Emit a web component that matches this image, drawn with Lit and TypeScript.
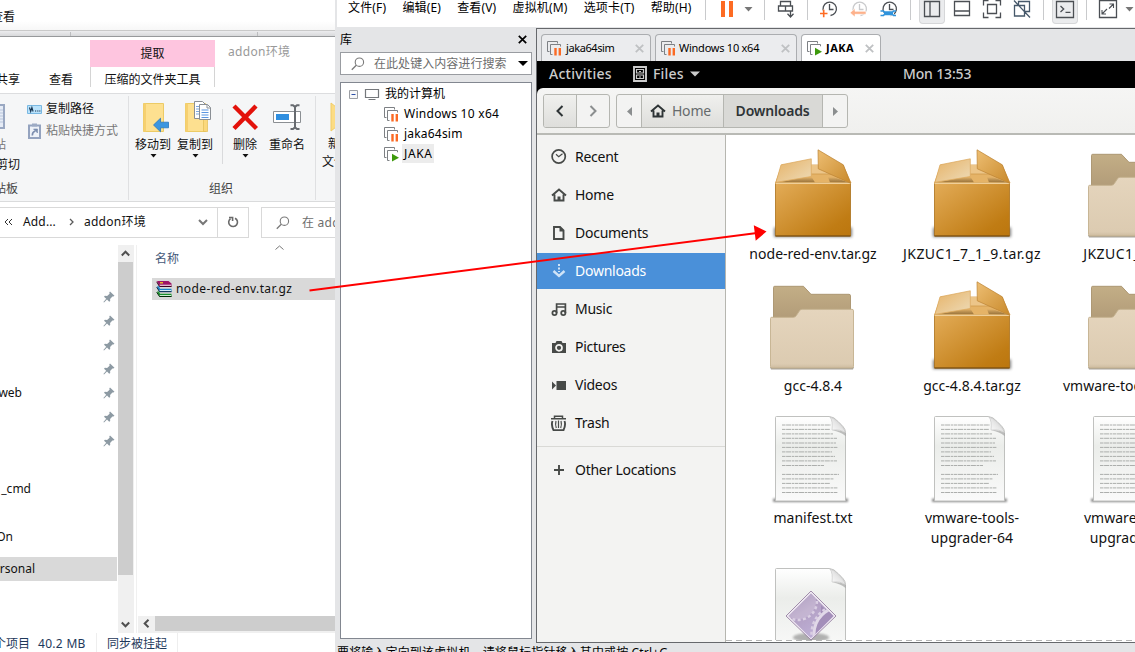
import { LitElement, html, svg, css, nothing } from "lit";
import { customElement } from "lit/decorators.js";
import { classMap } from "lit/directives/class-map.js";

const base = css`
  * { box-sizing: border-box; }
  svg { display: block; flex: none; }
  span { white-space: nowrap; flex: none; }
`;

const caret = html`<svg width="7" height="4" viewBox="0 0 7 4"><path d="M0.5 0h6l-3 3.6z" fill="#111" /></svg>`;

const pin = html`<svg width="12" height="12" viewBox="0 0 12 12">
  <path d="M7 0.5l4.5 4.3-1.2.8-.9-.2-2.3 2.5.1 2-1 .9-2.2-2.2L1 11.5l-.6-.4 2.8-3.3L1 5.7l.9-.9 2.2.2L6.6 2.7 6.3 1.4z" fill="#8d9aa3" />
</svg>`;

const magnifier = (c: string) => html`<svg width="14" height="14" viewBox="0 0 14 14" fill="none" stroke=${c}>
  <circle cx="8.4" cy="5.2" r="4.2" stroke-width="1.1" /><path d="M5.3 8.3L.8 12.8" stroke-width="1.3" />
</svg>`;

const moveIcon = html`<svg width="36" height="34" viewBox="0 0 36 34">
  <path d="M8.5 2.5h20v28h-20z" fill="#fde090" stroke="#eccb66" /><path d="M8.5 2.5h2.5v28h-2.500z" fill="#f6d070" />
  <path d="M18.500 24l7-6.800v4h8v5.600h-8v4z" fill="#3c96e0" stroke="#2876bd" stroke-width=".8" />
</svg>`;
const copyIcon = html`<svg width="36" height="34" viewBox="0 0 36 34">
  <path d="M8.5 2.5h20v28h-20z" fill="#fde090" stroke="#eccb66" /><path d="M8.5 2.5h2.5v28h-2.500z" fill="#f6d070" />
  <path d="M26.500 18v12.500h4v-12.500z" fill="#fbd87c" stroke="#e2bd55" stroke-width=".7" />
  <path d="M17.500 .5h8l3 3v14h-11z" fill="#fff" stroke="#8a8f95" /><path d="M19 5.500h7M19 8h7M19 10.500h7M19 13h7" stroke="#7ba7de" />
  <path d="M22.500 3.500h8l3 3v12h-11z" fill="#fff" stroke="#8a8f95" /><path d="M30 3.500v3.500h3.500" fill="none" stroke="#8a8f95" />
  <path d="M24.500 9h7M24.500 11.500h7M24.500 14h7M24.500 16.500h7" stroke="#5b95e0" />
</svg>`;
const deleteIcon = html`<svg width="26" height="34" viewBox="0 0 26 34"><path d="M2 5l22.500 22.500M24 5l-22 22.500" stroke="#e3120b" stroke-width="4.400" /></svg>`;
const renameIcon = html`<svg width="30" height="34" viewBox="0 0 30 34" fill="none">
  <path d="M1.500 10.500h27v11h-27z" fill="#fff" stroke="#8b8f93" /><path d="M4 13h13v6h-13z" fill="#2f8fe0" />
  <path d="M18.500 4.300h2.500l2 1.600 2-1.600h2.500M18.500 28h2.500l2-1.600 2 1.600h2.500M23 5.500v21.500" stroke="#676b70" stroke-width="2" />
</svg>`;
const pathIcon = html`<svg width="15" height="9" viewBox="0 0 15 9">
  <path d="M.5.5h14v8h-14z" fill="#b9e2fb" stroke="#79b8e2" /><path d="M2.500 2.500l1.200 4 1.200-4 1.200 4M8 6h1.200M10.200 6h1.200M12.200 6h1.200" fill="none" stroke="#173450" stroke-width="1.100" />
</svg>`;
const shortcutIcon = html`<svg width="13" height="16" viewBox="0 0 13 16">
  <path d="M1 2.500h11v12.500h-11z" fill="#eef2f8" stroke="#94a3bf" stroke-width="2" /><path d="M4 .5h5v3h-5z" fill="#9dabc4" />
  <path d="M4.300 12.500c0-3 1-4 3-4.500" fill="none" stroke="#7b8dae" stroke-width="1.600" /><path d="M5.500 6h4v4z" fill="#7b8dae" stroke="#7b8dae" stroke-width=".6" />
</svg>`;
const rarIcon = html`<svg width="16" height="16" viewBox="0 0 16 16">
  <path d="M1 0h11.500l3 2.500v3h-12z" fill="#9c1466" /><path d="M3.500 3.700h11.500v1.200h-11.500z" fill="#e9c9db" /><path d="M.7.8l2.800 4.700h12" fill="none" stroke="#3a0020" />
  <path d="M1 5.200h2l1 2.500h11.500v3h-12z" fill="#1a86cc" /><path d="M3.500 9h11.500v1.100h-11.500z" fill="#d3ebf8" /><path d="M.7 6l2.800 4.700h12" fill="none" stroke="#012040" />
  <path d="M1 10.500h2l1 2.300h11.500v3h-12z" fill="#18902c" /><path d="M3.500 14h11.500v1h-11.500z" fill="#cdeed2" /><path d="M.7 11.200l2.800 4.300h12" fill="none" stroke="#022a08" />
  <path d="M4 1h3v1.500h-3z" fill="#e5b82b" />
</svg>`;

const navRows: { text?: string; cls?: string; pinned?: boolean }[] = [
  { pinned: true }, { pinned: true }, { pinned: true }, { pinned: true },
  { pinned: true, text: "web", cls: "e22" }, { pinned: true }, { pinned: true },
  {}, { text: "_cmd", cls: "e31" }, {}, { text: "AddOn", cls: "e13" },
];

@customElement("explorer-window")
class ExplorerWindow extends LitElement {
  static styles = [base, css`
    :host { display: flex; flex-direction: column; width: 335px; height: 652px; background: #fff; overflow: hidden; font: 12px/20px "Noto Sans", "Noto Sans CJK SC", sans-serif; color: #111; }
    .behind { height: 30px; padding-top: 7px; background: linear-gradient(#fff 70%, #f7f7f7); flex: none; }
    .clip { display: flex; justify-content: flex-end; overflow: hidden; flex: none; }
    .e6 { width: 6px; } .e13 { width: 13px; } .e15 { width: 15px; } .e18 { width: 18px; } .e20 { width: 20px; }
    .e22 { width: 22px; } .e29 { width: 30px; } .e31 { width: 31px; } .e35 { width: 35px; }
    .band { display: flex; height: 7px; flex: none; border-top: 1px solid #c9c9c9; border-bottom: 1px solid #97999b; background: linear-gradient(#ececee, #d8d9db); }
    .band i { border-right: 1px solid #bcbdbf; height: 4px; margin-top: 1px; width: 71px; }
    .band i + i { width: 187px; }
    .tabs { height: 57px; flex: none; display: flex; border-bottom: 1px solid #dcdddf; }
    .tabs .clip, .view { padding-top: 33px; }
    .view { width: 70px; padding-left: 29px; }
    .tool { width: 125px; padding-top: 3px; text-align: center; }
    .pink { background: #fec5df; height: 27px; line-height: 28px; }
    .toolname { height: 20px; line-height: 26px; border: solid #d4d4d4; border-width: 0 1px; }
    .title { color: #999; padding: 5px 0 0 13px; letter-spacing: .3px; }
    .ribbon { display: flex; height: 108px; flex: none; background: #f5f6f7; border-bottom: 1px solid #dadbdc; padding-top: 2px; }
    .group { display: flex; flex-direction: column; height: 104px; border-right: 1px solid #dfe0e2; flex: none; }
    .body { display: flex; height: 84px; }
    .foot { line-height: 22px; color: #444; text-align: center; }
    .g1 { width: 129px; } .g2 { width: 187px; } .g3 { width: 19px; border: 0; overflow: hidden; }
    .g2 .foot { padding-right: 2px; }
    .paste { width: 27px; padding-top: 8px; }
    .paste svg { margin-bottom: 5px; }
    .grey { color: #777; }
    .small { display: flex; align-items: center; height: 22px; gap: 4px; }
    .small.grey { padding-left: 1px; gap: 5px; }
    .smalls { padding-top: 2px; }
    .big { display: flex; flex-direction: column; align-items: center; width: 36px; padding-top: 5px; }
    .big + .big { margin-left: 6px; }
    .big svg + span { margin-bottom: -1px; }
    .g2 .body { padding-left: 6px; }
    .vsep { width: 1px; height: 55px; margin: 13px 4px 0 9px; background: #d9dadc; }
    .g3 svg { margin: 6px 0 0 14px; }
    .g3 span { line-height: 18px; }
    .g3 .n { padding: 3px 0 0 12px; } .g3 .w { padding-left: 6px; }
    .address { display: flex; height: 43px; padding-top: 5px; flex: none; }
    .box { display: flex; align-items: center; width: 249px; height: 31px; border: 1px solid #d9d9d9; border-left: 0; }
    .box .a { letter-spacing: .15px; margin: 0 13px 2px 10px; } .box .b { letter-spacing: .25px; margin: 0 49px 2px 10px; width: 64px; }
    .box .chev { width: 12px; } .box svg { margin-bottom: 1px; }
    .box .q { margin-left: 4px; }
    .refresh { display: flex; justify-content: center; align-items: center; height: 29px; width: 31px; margin-left: auto; border-left: 1px solid #d9d9d9; }
    .find { display: flex; align-items: center; gap: 12px; width: 74px; height: 31px; margin-left: 12px; padding-left: 14px; border: 1px solid #d9d9d9; border-right: 0; color: #6d6d6d; overflow: hidden; letter-spacing: .25px; }
    .panes { display: flex; height: 388px; flex: none; }
    .nav { width: 118px; padding-top: 40px; flex: none; }
    .navrow { display: flex; align-items: center; justify-content: space-between; height: 24px; width: 117px; padding-right: 2px; }
    .navrow svg { margin-left: auto; }
    .sel { background: #d9d9d9; margin-top: 8px; }
    .scroll { width: 16px; display: flex; flex-direction: column; flex: none; background: #f0f0f0; }
    .cap { height: 17px; width: 15px; display: flex; align-items: center; justify-content: center; }
    .thumb { height: 313px; width: 15px; background: #cdcdcd; }
    .push { margin-top: auto; }
    .main { display: flex; flex-direction: column; width: 199px; margin-left: 2px; border-left: 1px solid #f0f0f0; flex: none; }
    .sort { margin-left: 138px; height: 6px; }
    .head { color: #45597a; padding-left: 18px; margin-top: -2px; height: 29px; }
    .file { display: flex; align-items: center; gap: 4px; height: 22px; margin-left: 15px; padding-left: 4px; background: #d9d9d9; letter-spacing: .4px; }
    .hbar { display: flex; margin-top: auto; height: 17px; margin-left: 1px; background: #f0f0f0; }
    .hbar .cap { width: 17px; height: 15px; } .hbar .ht { flex: 1; background: #cdcdcd; height: 15px; }
    .status { display: flex; color: #1e395b; height: 19px; line-height: 22px; }
    .status .size { padding: 0 10px 0 8px; width: 67px; letter-spacing: .3px; border-right: 1px solid #eee; }
    .status .sync { padding: 0 10px; border-right: 1px solid #eee; }
  `];

  render() {
    const g = "#5a5a5a";
    return html`
      <div class="behind"><div class="clip e15"><span>查看</span></div></div>
      <div class="band"><i></i><i></i></div>
      <div class="tabs">
        <div class="clip e20"><span>共享</span></div>
        <div class="view"><span>查看</span></div>
        <div class="tool"><div class="pink">提取</div><div class="toolname">压缩的文件夹工具</div></div>
        <div class="title"><span>addon环境</span></div>
      </div>
      <div class="ribbon">
        <div class="group g1">
          <div class="body">
            <div class="paste">
              <svg width="6" height="26" viewBox="0 0 6 26"><path d="M-6 1h10v23h-10z" fill="#e6ecf6" stroke="#9aa8c2" stroke-width="2" /><path d="M0 6h3M0 9h3M0 12h3M0 15h3M0 18h3" stroke="#b9c6dc" /></svg>
              <div class="clip e6 grey"><span>粘贴</span></div>
              <div class="clip e20"><span>剪切</span></div>
            </div>
            <div class="smalls">
              <div class="small">${pathIcon}<span>复制路径</span></div>
              <div class="small grey">${shortcutIcon}<span>粘贴快捷方式</span></div>
            </div>
          </div>
          <div class="foot clip e18"><span>剪贴板</span></div>
        </div>
        <div class="group g2">
          <div class="body">
            <div class="big">${moveIcon}<span>移动到</span>${caret}</div>
            <div class="big">${copyIcon}<span>复制到</span>${caret}</div>
            <div class="vsep"></div>
            <div class="big">${deleteIcon}<span>删除</span>${caret}</div>
            <div class="big">${renameIcon}<span>重命名</span></div>
          </div>
          <div class="foot">组织</div>
        </div>
        <div class="group g3">
          <svg width="6" height="30" viewBox="0 0 6 30"><path d="M1 1l5 4v20l-5 4z" fill="#fcdc84" stroke="#f0cc66" /></svg>
          <span class="n">新建</span><span class="w">文件夹</span>
        </div>
      </div>
      <div class="address">
        <div class="box">
          <svg class="q" width="9" height="8" viewBox="0 0 9 8" fill="none" stroke="#333"><path d="M4 1L1 4l3 3M8 1L5 4l3 3" /></svg>
          <span class="a">Add...</span>
          <svg width="5" height="8" viewBox="0 0 5 8" fill="none" stroke=${g} stroke-width="1.300"><path d="M1 1l3 3-3 3" /></svg>
          <span class="b">addon环境</span>
          <svg class="chev" width="10" height="7" viewBox="0 0 10 7" fill="none" stroke="#777" stroke-width="2"><path d="M1 1l4 4 4-4" /></svg>
          <div class="refresh"><svg width="12" height="12" viewBox="0 0 12 12" fill="none" stroke="#6a6a6a" stroke-width="1.600"><path d="M8 2.200a4.400 4.400 0 1 1 -4.500 .4M2 1.500h3.600v3.600" /></svg></div>
        </div>
        <div class="find">${magnifier("#7a7a7a")}<span>在 addon环境 中搜索</span></div>
      </div>
      <div class="panes">
        <div class="nav">
          ${navRows.map((r) => html`<div class="navrow">
            ${r.text ? html`<div class="clip ${r.cls}"><span>${r.text}</span></div>` : nothing}${r.pinned ? pin : nothing}
          </div>`)}
          <div class="navrow sel"><div class="clip e35"><span>Personal</span></div></div>
        </div>
        <div class="scroll">
          <div class="cap"><svg width="9" height="7" viewBox="0 0 9 7" fill="none" stroke="#505050" stroke-width="2"><path d="M.8 5.500l3.700-3.800 3.700 3.800" /></svg></div>
          <div class="thumb"></div>
          <div class="cap push"><svg width="9" height="7" viewBox="0 0 9 7" fill="none" stroke="#505050" stroke-width="2"><path d="M.8 1.500l3.700 3.800 3.700-3.800" /></svg></div>
        </div>
        <div class="main">
          <div class="sort"><svg width="9" height="6" viewBox="0 0 9 6" fill="none" stroke="#777"><path d="M.5 4.500l4-3.500 4 3.500" /></svg></div>
          <div class="head">名称</div>
          <div class="file">${rarIcon}<span>node-red-env.tar.gz</span></div>
          <div class="hbar"><div class="cap"><svg width="7" height="9" viewBox="0 0 7 9" fill="none" stroke="#505050" stroke-width="2"><path d="M5.500.8L1.700 4.500l3.800 3.700" /></svg></div><div class="ht"></div></div>
        </div>
      </div>
      <div class="status"><div class="clip e29"><span>1 个项目</span></div><span class="size">40.2 MB</span><span class="sync">同步被挂起</span></div>
    `;
  }
}

const vmIcon = (running: boolean) => html`<svg width="15" height="15" viewBox="0 0 15 15" fill="none">
  <path d="M2.500 10.500h-2v-10h10v2M5.500 13.500h-2v-10h10v2" stroke="#7d8084" />
  ${running
    ? svg`<path d="M7 5.500h8v9h-8z" fill="#fff" opacity=".9" /><path d="M8 6.800l7 3.900-7 3.900z" fill="#3d9a0c" />`
    : svg`<path d="M8.500 7v7.500M12.800 7v7.500" stroke="#fb6a24" stroke-width="2.400" />`}
</svg>`;

const cross = (c: string, w: number) => html`<svg width="9" height="9" viewBox="0 0 9 9"><path d="M.8.8l7.400 7.400M8.200.8L.8 8.200" stroke=${c} stroke-width=${w} /></svg>`;

const tb = (inner: unknown, on = false) => html`<div class=${classMap({ tool: true, on })}><svg width="24" height="22" viewBox="0 0 24 22" fill="none" stroke="#4b4f54" stroke-width="1.300">${inner}</svg></div>`;
const clock = (c: string) => svg`<path d="M7 12.300a6.700 6.700 0 1 1 6.500 3.200M12.500 4v5.500h4" stroke=${c} />`;
const drop = html`<svg class="drop" width="9" height="5" viewBox="0 0 9 5"><path d="M.5 0h8l-4 4.500z" fill="#777" /></svg>`;
const bar = html`<i class="bar"></i>`;

@customElement("vm-window")
class VmWindow extends LitElement {
  static styles = [base, css`
    :host { display: flex; flex-direction: column; width: 800px; height: 652px; background: #e4e5e7; overflow: hidden; font: 12px/20px "Noto Sans", "Noto Sans CJK SC", sans-serif; color: #000; }
    .menu { display: flex; height: 27px; flex: none; margin-left: 2px; background: #fff; }
    .menus { display: flex; gap: 16.200px; letter-spacing: .15px; width: 368px; padding-left: 11px; line-height: 16px; flex: none; }
    .bar { width: 1px; height: 20px; margin-right: 9px; background: #c9cacc; flex: none; }
    .tool { width: 24px; height: 24px; margin-right: 6px; flex: none; }
    .tool:has(+ .bar) { margin-right: 9px; }
    .on { background: #ebecee; box-shadow: 0 0 0 1px #d6d7d9; border-radius: 0 0 3px 3px; height: 23px; }
    .drop { margin: 7px 11px 0 -1px; }
    .work { display: flex; height: 616px; flex: none; }
    .lib { display: flex; flex-direction: column; width: 192px; margin: 0 4px 0 5px; flex: none; }
    .libhead { display: flex; align-items: center; justify-content: space-between; height: 25px; padding-right: 5px; }
    .search { display: flex; align-items: center; height: 23px; padding: 0 3px 0 10px; background: #fff; border: 1px solid #999ca1; color: #6d6d6d; }
    .search span { margin-left: 9px; flex: 1; letter-spacing: .05px; }
    .tree { height: 557px; margin-top: 7px; padding: 1px 0 0 8px; background: #fff; border: 1px solid #828790; }
    .row { display: flex; align-items: center; height: 20px; gap: 5px; }
    .row svg + svg { margin-left: -1px; margin-right: -2px; }
    .child { padding-left: 35px; gap: 5px; letter-spacing: .28px; }
    .child.j { letter-spacing: .2px; }
    .cur { background: #ececec; padding: 0 2px; margin: -1px 0 0 -2px; line-height: 19px; letter-spacing: .6px; }
    .pane { display: flex; flex-direction: column; width: 599px; margin-top: 1px; border: solid #66686c; border-width: 1px 0 1px 1px; flex: none; }
    .tabs { display: flex; gap: 4px; height: 32px; padding: 5px 0 0 4px; flex: none; font-size: 11px; }
    .tab { display: flex; align-items: center; height: 27px; padding: 0 6px; border: 1px solid #abadb0; border-bottom: 0; border-radius: 4px 4px 0 0; background: #ebecee; }
    .tab svg:first-child { margin-left: -1px; }
    .tab span { margin-left: 3px; flex: 1; letter-spacing: -.25px; }
    .tab.t1 span { margin-left: 4px; letter-spacing: -.4px; }
    .tab.t3 span { letter-spacing: .5px; margin-left: 4px; }
    .t1 { width: 110px; } .t2 { width: 142px; } .t3 { width: 80px; background: #fff; font-weight: 700; }
    .hint { padding-left: 2px; line-height: 20px; letter-spacing: .14px; }
  `];

  render() {
    return html`
      <div class="menu">
        <div class="menus">${["文件(F)", "编辑(E)", "查看(V)", "虚拟机(M)", "选项卡(T)", "帮助(H)"].map((m) => html`<span>${m}</span>`)}</div>
        ${bar}
        ${tb(svg`<path d="M6 1h4v16h-4zM14 1h4v16h-4z" fill="#fd6b23" stroke="none" />`)}${drop}${bar}
        ${tb(svg`<path d="M6.500 6v-4.500h10v4.500M4.500 6h7v5h-7zM11.500 6h7v5h-7zM16.500 11v6M13.500 13.800l3 3.200 3-3.200" />`)}${bar}
        ${tb(svg`${clock("#4b4f54")}<path d="M3 13.500h8M7 9.700v8" stroke="#fff" stroke-width="3" /><path d="M3 13.500h7.500M6.700 9.700v7.500" stroke="#fd6b23" stroke-width="1.600" />`)}
        ${tb(svg`${clock("#c9cacc")}<path d="M3 12.800l5-4.300v2.800h11v3h-11v2.800z" fill="#fdb18b" stroke="#fff" stroke-width=".6" />`)}
        ${tb(svg`${clock("#4b4f54")}<path d="M7 13.200h10" stroke="#fff" stroke-width="5" /><path d="M3.500 11h3l1 1.200h8l1-1.200h2.500M3.500 15.500h3l1-1.200h8l1 1.200h2.500M7 13.300h9" stroke="#2f93dc" stroke-width="1.700" />`)}
        ${bar}
        ${tb(svg`<path d="M4.500 1.500h15v15h-15zM10 1.500v15" />`, true)}
        ${tb(svg`<path d="M4.500 1.500h15v14h-15zM4.500 11h15" />`)}
        ${tb(svg`<path d="M3.500 5.500v-5h5M15.500.5h5v5M20.500 12.500v5h-5M8.500 17.500h-5v-5M7.500 4.500h9v9h-9z" />`)}
        ${tb(svg`<path d="M8.500 6v-4.500h11v10h-5M4.500 5.500h10v10.500h-10zM4 .5l16 17" stroke="#46586a" />`)}
        ${bar}
        ${tb(svg`<path d="M3.500 1.500h17v16h-17zM7.500 6l3.200 3-3.200 3M12.500 12.300h5" />`, true)}
        ${bar}
        ${tb(svg`<path d="M3.500.5h17v17h-17z" /><path d="M13.500 4h4v4M17.500 4l-4.500 4.500M10 14h-4v-4M6 14l5-5" stroke-width="1.100" />`)}${drop}
      </div>
      <div class="work">
        <div class="lib">
          <div class="libhead"><span>库</span>${cross("#000", 1.7)}</div>
          <div class="search">${magnifier("#7a7a7a")}<span>在此处键入内容进行搜索</span><svg width="10" height="5" viewBox="0 0 10 5"><path d="M0 0h10l-5 5z" /></svg></div>
          <div class="tree">
            <div class="row">
              <svg width="9" height="9" viewBox="0 0 9 9"><path d="M.5.5h8v8h-8z" fill="#f6f7f8" stroke="#9b9ea3" /><path d="M2.500 4.500h4" stroke="#2c4fa8" /></svg>
              <svg width="20" height="13" viewBox="0 0 20 13" fill="none" stroke="#75787c"><path d="M3.500 1.500h13v8h-13zM6.500 11.500h7" stroke-width="1.200" /></svg>
              <span>我的计算机</span>
            </div>
            <div class="row child">${vmIcon(false)}<span>Windows 10 x64</span></div>
            <div class="row child j">${vmIcon(false)}<span>jaka64sim</span></div>
            <div class="row child">${vmIcon(true)}<span class="cur">JAKA</span></div>
          </div>
        </div>
        <div class="pane">
          <div class="tabs">
            <div class="tab t1">${vmIcon(false)}<span>jaka64sim</span>${cross("#bfc1c3", 1.8)}</div>
            <div class="tab t2">${vmIcon(false)}<span>Windows 10 x64</span>${cross("#bfc1c3", 1.8)}</div>
            <div class="tab t3">${vmIcon(true)}<span>JAKA</span>${cross("#bfc1c3", 1.8)}</div>
          </div>
          <guest-desktop></guest-desktop>
        </div>
      </div>
      <div class="hint"><span>要将输入定向到该虚拟机，请将鼠标指针移入其中或按 Ctrl+G。</span></div>
    `;
  }
}

const house = svg`<path d="M1 8.500L8 2.500l7 6M3.500 7.500v6h9v-6" stroke-width="1.900" /><path d="M6.500 14v-4.500h3v4.500z" fill="currentColor" stroke="none" />`;
const placeIcons: Record<string, unknown> = {
  Recent: svg`<circle cx="7.700" cy="7.500" r="6.600" stroke-width="1.700" /><path d="M5 5.300l2.700 2.400 3.800-3" stroke-width="1.200" />`,
  Home: house,
  Documents: svg`<path d="M3 2h6l3.500 3.500v8.500h-9.500z" stroke-width="1.900" /><path d="M8.500 2v4.500h4.500z" fill="currentColor" stroke="none" />`,
  Downloads: svg`<path d="M8 1v8" stroke-dasharray="2 1.500" stroke-width="2" /><path d="M2.500 8l5.500 5 5.500-5" stroke-width="2.400" />`,
  Music: svg`<circle cx="3.500" cy="12" r="2.100" stroke-width="1.800" /><circle cx="12.300" cy="12" r="2.100" stroke-width="1.800" /><path d="M5.600 12V3h8.800v9M5.600 6h8.800" stroke-width="1.700" />`,
  Pictures: svg`<path d="M1 4h3.500l1-2h5l1 2H15v10H1z" fill="currentColor" stroke="none" /><circle cx="8" cy="8.800" r="3" stroke="#f4f4f2" stroke-width="1.700" />`,
  Videos: svg`<path d="M5.500 4h9.500v9H5.500zM1 4.500l4 4-4 4z" fill="currentColor" stroke="none" />`,
  Trash: svg`<path d="M3.500 3v-1.700h8v1.700M0 3.700h15" stroke-width="1.500" /><path d="M1.500 6c-1 2.500-.5 6 1 9.200h10c1.500-3.200 2-6.700 1-9.200" stroke-width="1.900" /><path d="M5 6q-1 3.500.3 7M10 6q1 3.500-.3 7M7.500 5.500v7.500" stroke-width="1.200" />`,
  "Other Locations": svg`<path d="M8 3v10M3 8h10" stroke-width="1.900" />`,
};
const sym = (g: unknown) => html`<svg width="16" height="16" viewBox="0 0 16 16" fill="none" stroke="currentColor">${g}</svg>`;

const boxIcon = html`<svg width="96" height="96" viewBox="0 -0.500 96 96">
  <defs>
    <linearGradient id="f" x1="0" y1="0" x2="1" y2="1"><stop offset="0" stop-color="#e3ac58" /><stop offset=".8" stop-color="#c07c14" /><stop offset="1" stop-color="#bb760e" /></linearGradient>
    <linearGradient id="l" x1="0" y1="0" x2="1" y2="1"><stop offset="0" stop-color="#e6b266" /><stop offset=".8" stop-color="#ecd3a8" /></linearGradient>
    <linearGradient id="r" x1="0" y1="0" x2="1" y2="1"><stop offset="0" stop-color="#edbe73" /><stop offset="1" stop-color="#c98a2c" /></linearGradient>
    <linearGradient id="d" x1="0" y1="0" x2="0" y2="1"><stop offset=".3" stop-color="#000" stop-opacity="0" /><stop offset="1" stop-color="#4a2a00" stop-opacity=".5" /></linearGradient>
    <filter id="s" x="-10%" width="120%" y="-100%" height="300%"><feGaussianBlur stdDeviation="1.600" /></filter>
  </defs>
  <path d="M9 83h78v9.500H9z" fill="#000" opacity=".5" filter="url(#s)" />
  <path d="M17 20.500h61l8 18H10.500z" fill="#e5b367" stroke="#d79b45" stroke-width=".8" />
  <path d="M46 20.500h32v9H46z" fill="#ecc589" /><path d="M46 29.500h24" stroke="#cf9a4d" stroke-width=".8" />
  <path d="M13 38L46 31.500l4 6.500zM85.500 38.700L62 30l3 8z" fill="url(#d)" />
  <path d="M10.500 38.500h75v53h-75z" fill="url(#f)" stroke="#a9701a" stroke-width=".8" />
  <path d="M10.500 38.800h75" stroke="#f0cf98" stroke-width="1.500" /><path d="M10.500 91.500h75" stroke="#6e470c" />
  <path d="M16 20.300L46.300 14.300V32L11 37.800z" fill="url(#l)" stroke="#dba85c" stroke-width=".7" />
  <path d="M53 5.300L78.300 20.300 85.500 38.700 53.300 24.300z" fill="url(#r)" stroke="#bb8332" stroke-width=".7" />
</svg>`;

const folderIcon = html`<svg width="96" height="96" viewBox="0 0 96 96">
  <defs>
    <linearGradient id="b" x1="0" y1="0" x2="0" y2="1"><stop offset="0" stop-color="#c3ae86" /><stop offset=".8" stop-color="#b29c79" /></linearGradient>
    <linearGradient id="t" x1="0" y1="0" x2="0" y2="1"><stop offset="0" stop-color="#e5d5bd" /><stop offset=".93" stop-color="#dccbb1" /><stop offset="1" stop-color="#cdbb9f" /></linearGradient>
  </defs>
  <path d="M5 91h84l-1 2.500H6z" fill="#a6a29b" />
  <path d="M8.500 50V11.500q0-1.200 1.200-1.200H38.500l7.500 8h38q1.500 0 1.500 1.500V50z" fill="url(#b)" stroke="#a8926c" stroke-width=".9" />
  <path d="M5.500 42.500q0-1.200 1.200-1.200H28.500q2 0 3-2l3-4.500q1-1.500 2.500-1.500H87q1.500 0 1.500 1.500V90.500q0 1.500-1.500 1.500H7q-1.500 0-1.500-1.500z" fill="url(#t)" stroke="#c3b08d" stroke-width=".9" />
</svg>`;

const sheet = svg`
  <defs>
    <linearGradient id="p" x1="0" y1="0" x2="0" y2="1"><stop offset="0" stop-color="#fff" /><stop offset=".35" stop-color="#ebedea" /><stop offset="1" stop-color="#fafafa" /></linearGradient>
    <linearGradient id="c" x1="0" y1="1" x2="1" y2="0"><stop offset="0" stop-color="#fff" /><stop offset=".5" stop-color="#e6e6e6" /><stop offset="1" stop-color="#aaa" /></linearGradient>
    <filter id="h" x="-10%" width="120%" y="-100%" height="300%"><feGaussianBlur stdDeviation="1.200" /></filter>
  </defs>
  <path d="M8 90.500h75v3.500H8z" fill="#000" opacity=".45" filter="url(#h)" />
  <path d="M10.500 9.500q0-1 1-1H64q5 0 9 5l5 5q2.500 3 2.500 6V92.500q0 .5-.5.500H11q-.5 0-.5-.5z" fill="url(#p)" stroke="#b9bab8" stroke-width=".9" />
  <path d="M65 9q3 4 2 13 9-1 13.500 3-1-5-6-10T65 9z" fill="url(#c)" stroke="#bbb" stroke-width=".5" />
  <path d="M67.500 22.500q8-1 13 2.500v3q-5-4.500-13-5.500z" fill="#777" opacity=".45" />`;
const lines: [number, number][] = [[17, 49], [21.4, 48], [25.9, 51], [30.3, 55], [35, 54], [39.4, 56], [43.9, 50], [48.4, 53], [52.9, 55], [57.5, 42], [66.4, 57], [70.9, 52], [75.4, 48], [79.9, 56], [84.5, 56]];
const textIcon = html`<svg width="96" height="96" viewBox="0 0 96 96">${sheet}
  ${lines.map(([y, w]) => svg`<path d=${`M17 ${y}h${w}`} stroke="#acaeac" stroke-width="1" stroke-dasharray="3.500 .6 5 .7 2.500 .6" />`)}
</svg>`;
const scriptIcon = html`<svg width="96" height="96" viewBox="0 0 96 96">${sheet}
  <defs>
    <linearGradient id="m" x1="0" y1="0" x2=".6" y2="1"><stop offset="0" stop-color="#8b76a4" /><stop offset=".45" stop-color="#b3a0c4" /><stop offset="1" stop-color="#bfb1d8" /></linearGradient>
    <clipPath id="k"><path d="M46 33.500L68.500 56 46 78.500 23.500 56z" /></clipPath>
  </defs>
  <ellipse cx="46" cy="77.500" rx="18" ry="4.500" fill="#000" opacity=".28" filter="url(#h)" />
  <path d="M46 31L71 56 46 80 21 56z" fill="#f0eaf3" stroke="#8b7498" stroke-width=".8" />
  <path d="M46 33.500L68.500 56 46 78.500 23.500 56z" fill="url(#m)" />
  <g clip-path="url(#k)" fill="none">
    <circle cx="33" cy="41" r="18" fill="#d8cce1" opacity=".45" /><circle cx="33" cy="41" r="19" stroke="#dacfe3" stroke-width="2.500" stroke-dasharray="3 2.400" />
    <path d="M56 45q4 5 17 10l-12 25h-12q-1-20 7-27z" fill="#9c86b1" opacity=".75" />
    <circle cx="76" cy="74" r="27" stroke="#e1d8e8" stroke-width="3" /><circle cx="76" cy="74" r="29.500" stroke="#dacfe3" stroke-width="2.500" stroke-dasharray="3 2.400" />
  </g>
</svg>`;

const art: Record<string, unknown> = { box: boxIcon, folder: folderIcon, text: textIcon, script: scriptIcon };
const files: [string, string[]][] = [
  ["box", ["node-red-env.tar.gz"]], ["box", ["JKZUC1_7_1_9.tar.gz"]], ["folder", ["JKZUC1_7_1_9"]],
  ["folder", ["gcc-4.8.4"]], ["box", ["gcc-4.8.4.tar.gz"]], ["folder", ["vmware-tools-distrib"]],
  ["text", ["manifest.txt"]], ["text", ["vmware-tools-", "upgrader-64"]], ["text", ["vmware-tools-", "upgrader-32"]],
  ["script", []],
];

@customElement("guest-desktop")
class GuestDesktop extends LitElement {
  static styles = [base, css`
    :host { display: flex; flex-direction: column; width: 598px; height: 581px; background: #000; overflow: hidden; font: 14px/20px "Noto Sans", sans-serif; letter-spacing: -.15px; color: #111; }
    .top { display: flex; align-items: center; height: 27px; padding: 0 0 2px 12px; color: #ccc; font-weight: 500; letter-spacing: 0; flex: none; }
    .act { width: 84px; letter-spacing: .25px; }
    .files { width: 33px; margin: 0 4px 0 6px; letter-spacing: .2px; }
    .time { margin-left: 203px; letter-spacing: -.15px; }
    .head { display: flex; align-items: center; height: 47px; padding: 1px 0 0 6px; background: linear-gradient(#f5f5f4, #f0f0ee); border-bottom: 2px solid #b9bab5; border-radius: 6px 0 0 0; flex: none; }
    .btns { display: flex; height: 34px; border: 1px solid #b5b6b1; border-radius: 3px; background: #f3f3f2; overflow: hidden; margin-right: 6px; }
    .b { display: flex; align-items: center; justify-content: center; border-right: 1px solid #b5b6b1; color: #8b8e8f; gap: 6px; }
    .b:last-child { border: 0; }
    .raised { background: linear-gradient(#f0f0ee, #dededb); }
    .w33 { width: 33px; } .w32 { width: 32px; } .w25 { width: 25px; } .w82 { width: 82px; padding-right: 4px; } .w99 { width: 99px; } .w24 { width: 24px; }
    .dark { color: #2e3436; }
    .down { background: #d9d9d6; color: #2e3436; font-weight: 600; letter-spacing: -.2px; padding-right: 1px; }
    .home span { color: #666b6d; } .home svg { color: #2e3436; }
    .body { display: flex; height: 507px; }
    .side { width: 189px; padding-top: 4px; background: #f3f3f2; border-right: 1px solid #b6b6b0; flex: none; letter-spacing: -.26px; }
    .place { display: flex; align-items: center; gap: 8px; height: 36px; margin-bottom: 2px; padding-left: 14px; }
    .place svg { color: #474a48; }
    .place.sel { background: #4a90d9; color: #fff; } .place.sel svg { color: #cfe3f7; }
    .line { height: 1px; background: #d9d9d6; margin: 5px 0; }
    .view { display: flex; flex-direction: column; width: 409px; height: 507px; background: #fff; overflow: hidden; }
    .grid { display: grid; grid-template-columns: repeat(3, 159px); row-gap: 12px; width: 477px; height: 505px; padding-top: 9px; margin-left: 8px; align-content: start; overflow: hidden; flex: none; }
    .cell { display: flex; flex-direction: column; align-items: center; letter-spacing: .02px; }
    .wide { letter-spacing: .45px; }
    .pic { width: 97px; height: 100px; }
    .cell span { margin-left: -1px; }
    .dash { height: 1px; background: repeating-linear-gradient(90deg, #b4b4b4 0 6px, #fff 6px 10px); flex: none; }
  `];

  render() {
    return html`
      <div class="top">
        <span class="act">Activities</span>
        <svg width="14" height="16" viewBox="0 0 14 16" fill="none" stroke="#ccc"><path d="M1 1h12v14h-12z" stroke-width="1.900" /><path d="M3.500 3.500h7v3.500h-7zM3.500 9h7v3.500h-7z" stroke-width="1.200" /><path d="M6 5.500h2M6 11h2" /></svg>
        <span class="files">Files</span>
        <svg width="10" height="6" viewBox="0 0 10 6"><path d="M0 .5h10l-5 5z" fill="#ccc" /></svg>
        <span class="time">Mon 13:53</span>
      </div>
      <div class="head">
        <div class="btns">
          <div class="b raised dark w33"><svg width="8" height="12" viewBox="0 0 8 12" fill="none" stroke="currentColor" stroke-width="2"><path d="M6.500 1l-5 5 5 5" /></svg></div>
          <div class="b w32"><svg width="8" height="12" viewBox="0 0 8 12" fill="none" stroke="currentColor" stroke-width="2"><path d="M1.500 1l5 5-5 5" /></svg></div>
        </div>
        <div class="btns">
          <div class="b w25"><svg width="5" height="9" viewBox="0 0 5 9"><path d="M5 0v9l-5-4.500z" fill="currentColor" /></svg></div>
          <div class="b raised w82 home">${sym(house)}<span>Home</span></div>
          <div class="b down w99"><span>Downloads</span></div>
          <div class="b w24"><svg width="5" height="9" viewBox="0 0 5 9"><path d="M0 0v9l5-4.500z" fill="currentColor" /></svg></div>
        </div>
      </div>
      <div class="body">
        <div class="side">
          ${Object.keys(placeIcons).map((name) => html`
            ${name === "Other Locations" ? html`<div class="line"></div>` : nothing}
            <div class=${classMap({ place: true, sel: name === "Downloads" })}>${sym(placeIcons[name])}<span>${name}</span></div>`)}
        </div>
        <div class="view">
          <div class="grid">${files.map(([kind, label]) => html`
            <div class="cell"><div class="pic">${art[kind]}</div>${label.map((l) => html`<span class=${classMap({ wide: l.includes("_") })}>${l}</span>`)}</div>`)}</div>
          <div class="dash"></div>
        </div>
      </div>
    `;
  }
}

@customElement("app-root")
class AppRoot extends LitElement {
  static styles = [base, css`
    :host { display: flex; position: relative; width: 1135px; height: 652px; overflow: hidden; }
    .arrow { position: absolute; left: 0; top: 0; pointer-events: none; }
  `];

  render() {
    return html`
      <explorer-window></explorer-window>
      <vm-window></vm-window>
      <svg class="arrow" width="1135" height="652" viewBox="0 0 1135 652">
        <path d="M309.500 290.500L757 233" stroke="#f00" stroke-width="1.900" />
        <path d="M753.800 225.300L766.500 231.500 755.700 240.700z" fill="#f00" />
      </svg>
    `;
  }
}
